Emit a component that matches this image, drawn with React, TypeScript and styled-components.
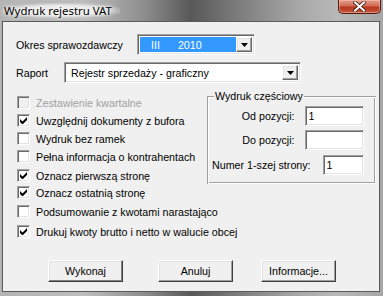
import React from "react";
import styled, { createGlobalStyle } from "styled-components";

const Global = createGlobalStyle`
  html, body { margin: 0; padding: 0; background: #f0f0f0; }
  * { box-sizing: border-box; }
`;

const UI_FONT = `"Liberation Sans", Arial, sans-serif`;

const Frame = styled.div`
  width: 383px;
  height: 296px;
  display: flex;
  flex-direction: column;
  padding: 0 3px 4px 2px;
  background: linear-gradient(90deg, #b4b4b4 0%, #bdbdbd 22%, #8c8c8c 38%, #585858 50%, #767676 60%, #a8a8a8 78%, #b8b8b8 88%, #a6a6a6 100%);
  font-family: ${UI_FONT};
`;

const TitleBar = styled.div`
  height: 21px;
  flex: none;
  display: flex;
  justify-content: space-between;
  align-items: flex-start;
  padding-left: 1px;
`;

const Title = styled.div`
  margin-top: 3px;
  font-family: "Noto Sans", "Open Sans", sans-serif;
  font-size: 11.4px;
  line-height: 15px;
  color: #000;
  padding: 0 8px 0 1px;
  background: radial-gradient(ellipse at center, rgba(238,238,238,0.95) 45%, rgba(238,238,238,0) 78%);
  text-shadow: 0 0 6px #fff, 0 0 3px #fff;
`;

const CloseBtn = styled.div`
  width: 43px;
  height: 14px;
  margin-right: -1px;
  border: 1px solid #4e1a14;
  border-top: none;
  border-radius: 0 0 5px 5px;
  background: linear-gradient(180deg, #e6a08e 0%, #d16a52 45%, #b6371f 55%, #c8573b 100%);
  box-shadow: inset 0 0 0 1px rgba(255,200,190,0.5);
  display: flex;
  align-items: center;
  justify-content: center;
`;

const Client = styled.div`
  flex: 1;
  border: 1px solid #5a5a5a;
  background: #f0f0f0;
  display: flex;
  flex-direction: column;
  padding: 0 0 0 13px;
  font-size: 10.7px;
  color: #000;
`;

const FieldRow = styled.div<{ $top: number }>`
  display: flex;
  align-items: center;
  margin-top: ${(p) => p.$top}px;
  height: 21px;
`;

const Label = styled.span<{ $width: number }>`
  width: ${(p) => p.$width}px;
  flex: none;
  white-space: nowrap;
`;

const Combo = styled.div<{ $width: number }>`
  width: ${(p) => p.$width}px;
  height: 21px;
  display: flex;
  align-items: stretch;
  padding: 2px;
  background: #fff;
  border-style: solid;
  border-width: 1px;
  border-color: #a0a0a0 #fff #fff #a0a0a0;
  box-shadow: inset 1px 1px 0 #696969, inset -1px -1px 0 #e3e3e3;
`;

const ComboValue = styled.div<{ $selected?: boolean }>`
  flex: 1;
  display: flex;
  align-items: center;
  padding-left: ${(p) => (p.$selected ? 11 : 4)}px;
  gap: 18px;
  background: ${(p) => (p.$selected ? "#3399ff" : "#fff")};
  color: ${(p) => (p.$selected ? "#fff" : "#000")};
  white-space: nowrap;
`;

const ArrowBtn = styled.div`
  width: 16px;
  flex: none;
  background: #f0f0f0;
  border-style: solid;
  border-width: 1px;
  border-color: #fff #696969 #696969 #fff;
  box-shadow: inset -1px -1px 0 #a0a0a0, inset 1px 1px 0 #e3e3e3;
  display: flex;
  align-items: center;
  justify-content: center;
`;

const Body = styled.div`
  display: flex;
  align-items: flex-start;
  margin-top: 13px;
`;

const CheckList = styled.div`
  width: 191px;
  flex: none;
  display: flex;
  flex-direction: column;
`;

const CheckRow = styled.div<{ $top: number; $disabled?: boolean }>`
  display: flex;
  align-items: center;
  height: 13px;
  margin-top: ${(p) => p.$top}px;
  padding-left: 1px;
  gap: 6px;
  color: ${(p) => (p.$disabled ? "#a0a0a0" : "#000")};
  white-space: nowrap;
`;

const Box = styled.div<{ $disabled?: boolean }>`
  width: 13px;
  height: 13px;
  flex: none;
  background: ${(p) => (p.$disabled ? "#f0f0f0" : "#fff")};
  border-style: solid;
  border-width: 1px;
  border-color: #a0a0a0 #fff #fff #a0a0a0;
  box-shadow: inset 1px 1px 0 #696969, inset -1px -1px 0 #e3e3e3;
  display: flex;
  align-items: center;
  justify-content: center;
`;

const Group = styled.fieldset`
  margin: 0;
  width: 167px;
  height: 88px;
  padding: 0 12px 0 5px;
  border: none;
  box-shadow: inset 1px 1px 0 #a0a0a0, inset -1px -1px 0 #fff, inset 2px 2px 0 #fff, inset -2px -2px 0 #a0a0a0;
  display: flex;
  flex-direction: column;
`;

const GroupTitle = styled.div`
  align-self: flex-start;
  margin-top: -6px;
  margin-left: 2px;
  padding: 0 1px;
  background: #f0f0f0;
  line-height: 13px;
  white-space: nowrap;
`;

const EditRow = styled.div<{ $top: number; $gap: number }>`
  display: flex;
  justify-content: flex-end;
  align-items: center;
  margin-top: ${(p) => p.$top}px;
  gap: ${(p) => p.$gap}px;
  white-space: nowrap;
`;

const Edit = styled.div<{ $width: number }>`
  width: ${(p) => p.$width}px;
  height: 20px;
  padding: 2px 3px;
  background: #fff;
  border-style: solid;
  border-width: 1px;
  border-color: #a0a0a0 #fff #fff #a0a0a0;
  box-shadow: inset 1px 1px 0 #696969, inset -1px -1px 0 #e3e3e3;
  line-height: 14px;
`;

const ButtonRow = styled.div`
  display: flex;
  margin-top: auto;
  margin-bottom: 9px;
  padding-left: 32px;
`;

const Button = styled.div<{ $left: number; $default?: boolean }>`
  width: 75px;
  height: 22px;
  margin-left: ${(p) => p.$left}px;
  display: flex;
  align-items: center;
  justify-content: center;
  background: #f0f0f0;
  border-style: solid;
  border-width: 1px;
  border-color: #fff #404040 #404040 #fff;
  box-shadow: ${(p) =>
    p.$default
      ? "inset -1px -1px 0 #808080, inset 1px 1px 0 #e3e3e3"
      : "inset -1px -1px 0 #a0a0a0, inset 1px 1px 0 #e3e3e3"};
`;

const Check = () => (
  <svg width="7" height="7" viewBox="0 0 7 7">
    <path d="M0 2v3l2 2h1l4-4V0L2.5 4.5z" fill="#000" />
  </svg>
);

const Arrow = () => (
  <svg width="7" height="4" viewBox="0 0 7 4">
    <path d="M0 0h7L3.5 4z" fill="#000" />
  </svg>
);

const CloseX = () => (
  <svg width="13" height="11" viewBox="0 0 13 11">
    <path d="M2 1.5L11 9.5M11 1.5L2 9.5" stroke="#3b1a14" strokeWidth="3.6" strokeLinecap="square" />
    <path d="M2 1.5L11 9.5M11 1.5L2 9.5" stroke="#ffffff" strokeWidth="2" strokeLinecap="square" />
  </svg>
);

const checks: { text: string; checked?: boolean; disabled?: boolean; top: number }[] = [
  { text: "Zestawienie kwartalne", disabled: true, top: 0 },
  { text: "Uwzględnij dokumenty z bufora", checked: true, top: 5 },
  { text: "Wydruk bez ramek", top: 5 },
  { text: "Pełna informacja o kontrahentach", top: 5 },
  { text: "Oznacz pierwszą stronę", checked: true, top: 6 },
  { text: "Oznacz ostatnią stronę", checked: true, top: 4 },
  { text: "Podsumowanie z kwotami narastająco", top: 6 },
  { text: "Drukuj kwoty brutto i netto w walucie obcej", checked: true, top: 7 },
];

export default function App() {
  return (
    <>
      <Global />
      <Frame>
        <TitleBar>
          <Title>Wydruk rejestru VAT</Title>
          <CloseBtn>
            <CloseX />
          </CloseBtn>
        </TitleBar>
        <Client>
          <FieldRow $top={12}>
            <Label $width={121}>Okres sprawozdawczy</Label>
            <Combo $width={118}>
              <ComboValue $selected>
                <span>III</span>
                <span>2010</span>
              </ComboValue>
              <ArrowBtn>
                <Arrow />
              </ArrowBtn>
            </Combo>
          </FieldRow>
          <FieldRow $top={7}>
            <Label $width={48}>Raport</Label>
            <Combo $width={237}>
              <ComboValue>Rejestr sprzedaży - graficzny</ComboValue>
              <ArrowBtn>
                <Arrow />
              </ArrowBtn>
            </Combo>
          </FieldRow>
          <Body>
            <CheckList>
              {checks.map((c) => (
                <CheckRow key={c.text} $top={c.top} $disabled={c.disabled}>
                  <Box $disabled={c.disabled}>{c.checked && <Check />}</Box>
                  <span>{c.text}</span>
                </CheckRow>
              ))}
            </CheckList>
            <Group>
              <GroupTitle>Wydruk częściowy</GroupTitle>
              <EditRow $top={3} $gap={10}>
                <span>Od pozycji:</span>
                <Edit $width={59}>1</Edit>
              </EditRow>
              <EditRow $top={4} $gap={10}>
                <span>Do pozycji:</span>
                <Edit $width={59} />
              </EditRow>
              <EditRow $top={5} $gap={12}>
                <span>Numer 1-szej strony:</span>
                <Edit $width={41}>1</Edit>
              </EditRow>
            </Group>
          </Body>
          <ButtonRow>
            <Button $left={0} $default>Wykonaj</Button>
            <Button $left={35}>Anuluj</Button>
            <Button $left={28}>Informacje...</Button>
          </ButtonRow>
        </Client>
      </Frame>
    </>
  );
}
